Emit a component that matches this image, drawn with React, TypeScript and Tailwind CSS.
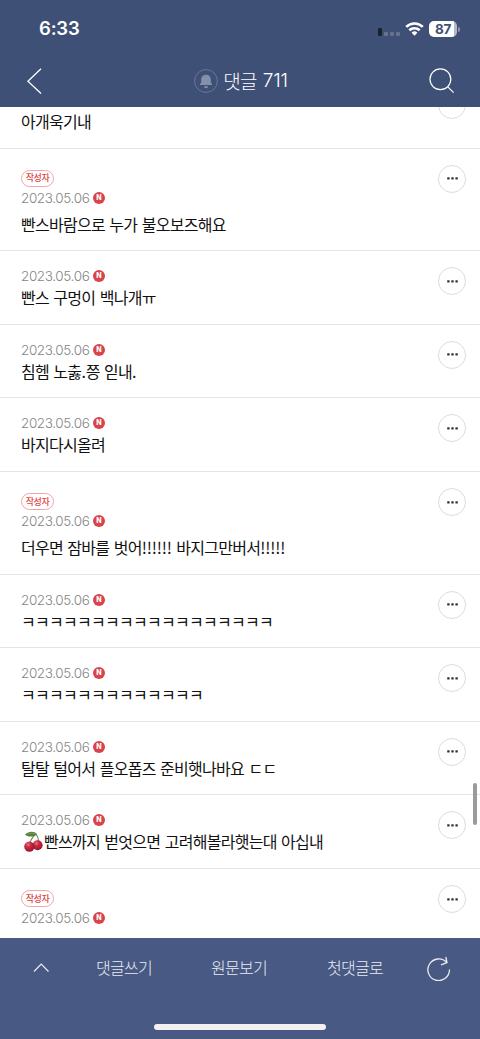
import React from 'react';

const KR = "font-['Noto_Sans_CJK_KR','Noto_Sans',sans-serif]";

type Comment = { text?: string; author?: boolean; cherry?: boolean };

const comments: Comment[] = [
  { text: '빤스바람으로 누가 불오보즈해요', author: true },
  { text: '빤스 구멍이 백나개ㅠ' },
  { text: '침헴 노춣.쯩 읻내.' },
  { text: '바지다시올려' },
  { text: '더우면 잠바를 벗어!!!!!! 바지그만버서!!!!!', author: true },
  { text: 'ㅋㅋㅋㅋㅋㅋㅋㅋㅋㅋㅋㅋㅋㅋㅋㅋㅋㅋ' },
  { text: 'ㅋㅋㅋㅋㅋㅋㅋㅋㅋㅋㅋㅋㅋ' },
  { text: '탈탈 털어서 플오폽즈 준비햇나바요 ㄷㄷ' },
  { text: '빤쓰까지 벋엇으면 고려해볼라햇는대 아십내', cherry: true },
  { author: true },
];

function More() {
  return (
    <button className="flex h-7 w-7 shrink-0 items-center justify-center rounded-full border border-[#dcdcdc]">
      <svg className="h-[3px] w-[11px]" viewBox="0 0 11 3" fill="#333">
        <rect x="0.200" y="0.300" width="2.400" height="2.200" rx=".5" />
        <rect x="4.300" y="0.300" width="2.400" height="2.200" rx=".5" />
        <rect x="8.400" y="0.300" width="2.400" height="2.200" rx=".5" />
      </svg>
    </button>
  );
}

function Cherries() {
  return (
    <svg className="h-[21px] w-[20px] shrink-0" viewBox="0 0 20 21" fill="none">
      <defs>
        <radialGradient id="cherry" cx=".38" cy=".3" r=".75">
          <stop offset="0" stopColor="#ef7480" />
          <stop offset=".35" stopColor="#cb2a42" />
          <stop offset="1" stopColor="#94142c" />
        </radialGradient>
      </defs>
      <path d="M13 3C10.500 5 8 8 7 12M13 3c2 2.500 2.500 5 2.500 8.500" stroke="#7d9150" strokeWidth="1.100" />
      <path d="M14 3C11-.3 5.500.1 2 3.600 5 6.500 10.500 6.200 14 3Z" fill="#55803e" />
      <path d="M12.500 2.700C9 1.900 6.300 2.200 3.500 3.600" stroke="#89a960" strokeWidth=".7" />
      <circle cx="14.600" cy="14.300" r="5" fill="url(#cherry)" />
      <circle cx="6.400" cy="15.600" r="5.200" fill="url(#cherry)" />
    </svg>
  );
}

function CommentText({ text }: { text: string }) {
  return (
    <span>
      {text.split(/([!.]+)/).map((part, i) =>
        i % 2 ? (
          <span key={i} className="tracking-[-0.150px]">
            {part}
          </span>
        ) : (
          part
        ),
      )}
    </span>
  );
}

function Row({ text, author, cherry }: Comment) {
  return (
    <li
      className={`flex shrink-0 items-start justify-between border-b border-[#e4e4e4] pr-[14px] pl-[21px] ${
        author ? 'h-[102.6px]' : 'h-[73.6px]'
      } pt-[16px]`}
    >
      <div className="flex flex-col items-start">
        {author && (
          <span
            className={`mt-[5px] mb-[2px] flex h-[17px] w-[33px] items-center justify-center rounded-full border border-[#f3a3a5] text-[9px] font-medium tracking-[-0.500px] text-[#dc4549] ${KR}`}
          >
            작성자
          </span>
        )}
        <div className="flex h-[18px] items-center gap-[4px]">
          <span className="w-[68px] font-['Inter',sans-serif] text-[13.500px] leading-[18px] font-light tracking-[-0.380px] whitespace-nowrap text-[#858585]">
            2023.05.06
          </span>
          <span className="flex h-3 w-3 items-center justify-center rounded-full bg-[#d94349] font-['Inter',sans-serif] text-[7px] leading-3 font-extrabold text-white">
            N
          </span>
        </div>
        <p
          className={`flex h-6 items-center text-[16px] leading-6 tracking-[-0.720px] [word-spacing:1.500px] whitespace-nowrap text-[#111] ${
            author ? 'mt-[5px]' : 'mt-0'
          } ${KR}`}
        >
          {cherry && (
            <span className="mr-[1px] ml-[2px] flex">
              <Cherries />
            </span>
          )}
          {text && <CommentText text={text} />}
        </p>
      </div>
      <More />
    </li>
  );
}

export default function App() {
  return (
    <div className="flex h-[1039px] w-[480px] flex-col overflow-hidden bg-white">
      <header className="flex h-[107px] shrink-0 flex-col bg-[#3f5077] text-white">
        <div className="flex h-[58px] items-center justify-between pr-[20px] pl-[39px]">
          <span className="font-['Inter',sans-serif] text-[18.500px] font-semibold tracking-[-0.200px]">6:33</span>
          <div className="flex items-center">
            <div className="mt-[5px] mr-[5px] flex items-end gap-[2px]">
              <i className="h-2 w-1 rounded-[1px] bg-[#1c2130]" />
              <i className="h-1 w-1 rounded-[1px] bg-[#66738f]" />
              <i className="h-1 w-1 rounded-[1px] bg-[#66738f]" />
              <i className="h-1 w-1 rounded-[1px] bg-[#66738f]" />
            </div>
            <svg className="mr-[5px] h-[14px] w-[19px]" viewBox="0 0 19 14" fill="none" stroke="white" strokeWidth="2.600">
              <path d="M1.200 4.900C5.900.3 13.100.3 17.800 4.900" />
              <path d="M4.300 8.300c2.900-2.800 7.500-2.800 10.400 0" />
              <path d="M6.600 10.700a4.200 4.200 0 0 1 5.800 0L9.500 13.700Z" fill="white" stroke="none" />
            </svg>
            <div className="flex h-4 w-7 items-center justify-center rounded-[5px] bg-[linear-gradient(90deg,white_0_25px,#b3bac8_25px)] font-['Inter',sans-serif] text-[13.500px] font-bold tracking-[-0.200px] text-[#3f5077]">
              87
            </div>
            <i className="ml-[1px] h-[5px] w-[2px] rounded-r-full bg-[#8c97ae]" />
          </div>
        </div>
        <div className="flex h-[49px] items-start justify-between pr-[25px] pl-[27px]">
          <svg className="mt-[10px] h-[26px] w-[15px]" viewBox="0 0 15 26" fill="none" stroke="white" strokeWidth="1.300">
            <path d="M14 .8.900 13.200 14 25.500" />
          </svg>
          <div className="mt-[9px] ml-[11px] flex h-7 items-center">
            <svg className="h-6 w-6" viewBox="0 0 24 24">
              <circle cx="12" cy="12" r="11.400" fill="none" stroke="#68779a" />
              <path d="M6 16v-1.200l1.200-1V10.500a4.800 4.800 0 0 1 9.600 0v3.300l1.200 1V16ZM10 17.300h4a2 2 0 0 1-4 0Z" fill="#8490a9" />
            </svg>
            <h1 className={`ml-[5px] flex items-center gap-[6px] text-[19px] leading-7 font-light tracking-[-0.700px] whitespace-nowrap ${KR}`}>
              <span>댓글</span>
              <span className="font-['Inter',sans-serif] tracking-[-0.200px]">711</span>
            </h1>
          </div>
          <svg className="mt-[10px] h-[26px] w-[26px]" viewBox="0 0 26 26" fill="none" stroke="white" strokeWidth="1.200">
            <circle cx="11.400" cy="11.300" r="10.400" />
            <path d="m18.600 18.700 6 6" />
          </svg>
        </div>
      </header>

      <main className="relative min-h-0 flex-1 overflow-hidden">
        <ul className="flex flex-col">
          <li className="flex h-[41.700px] shrink-0 items-start justify-between border-b border-[#e4e4e4] pr-[14px] pl-[21px]">
            <p className={`mt-[2px] text-[16px] leading-6 tracking-[-0.720px] text-[#111] ${KR}`}>아개욱기내</p>
            <div className="-mt-4">
              <More />
            </div>
          </li>
          {comments.map((c, i) => (
            <Row key={i} {...c} />
          ))}
        </ul>
        <i className="absolute top-[676px] right-[3px] h-[42px] w-1 rounded-full bg-[#9b9b9b]" />
      </main>

      <footer className={`flex h-[101px] shrink-0 flex-col bg-[#485984] text-[#e9ecf3] ${KR}`}>
        <nav className="flex h-[60px] items-center pl-[33px] text-[16px] leading-6 font-light tracking-[-0.720px]">
          <svg className="h-[10px] w-4" viewBox="0 0 16 10" fill="none" stroke="currentColor" strokeWidth="1.200">
            <path d="M1 8.500 8.200 1 15.500 8.500" />
          </svg>
          <span className="mb-[2px] ml-[47px] w-[115px]">댓글쓰기</span>
          <span className="mb-[2px] w-[116px]">원문보기</span>
          <span className="mb-[2px] w-[99px]">첫댓글로</span>
          <svg className="h-[26px] w-[25px]" viewBox="0 0 25 26" fill="none" stroke="currentColor" strokeWidth="1.300">
            <path d="M23.500 14.600A10.800 10.800 0 1 1 20.800 7.600M19.800 2l1.200 5.600-6 2.200" />
          </svg>
        </nav>
        <div className="mt-[26px] ml-[154px] h-[6px] w-[172px] rounded-full bg-[#f2f1ef]" />
      </footer>
    </div>
  );
}
